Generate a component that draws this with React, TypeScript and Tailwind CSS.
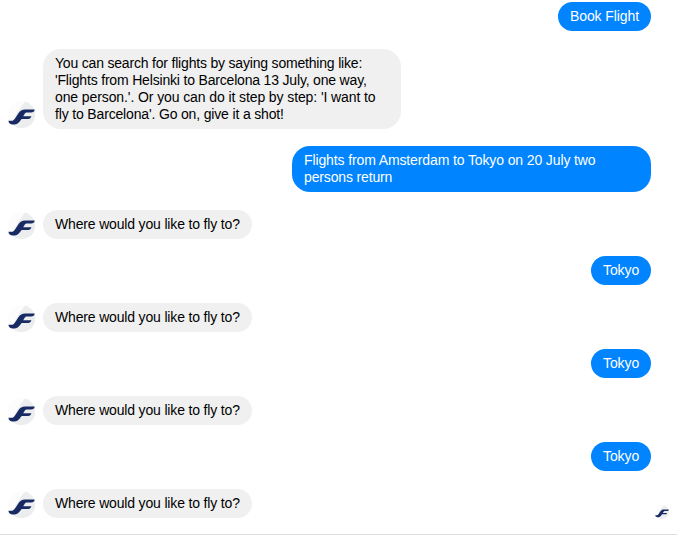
type Message = { from: "bot" | "user"; lines: string[]; box: string; track: string[] };

const question = (box: string): Message => ({
  from: "bot",
  lines: ["Where would you like to fly to?"],
  box,
  track: ["tracking-[-0.165px]"],
});

const tokyo = (box: string): Message => ({
  from: "user",
  lines: ["Tokyo"],
  box,
  track: ["tracking-[-0.1px]"],
});

const messages: Message[] = [
  { from: "user", lines: ["Book Flight"], box: "w-[93px]", track: ["tracking-[-0.1px]"] },
  {
    from: "bot",
    lines: [
      "You can search for flights by saying something like:",
      "'Flights from Helsinki to Barcelona 13 July, one way,",
      "one person.'. Or you can do it step by step: 'I want to",
      "fly to Barcelona'. Go on, give it a shot!",
    ],
    box: "mt-[18px] w-[358px]",
    track: ["tracking-[-0.19px]", "tracking-[-0.18px]", "tracking-[-0.1px]", "tracking-[-0.16px]"],
  },
  {
    from: "user",
    lines: ["Flights from Amsterdam to Tokyo on 20 July two", "persons return"],
    box: "mt-[17px] w-[359px]",
    track: ["tracking-[-0.12px]", "tracking-[-0.15px]"],
  },
  question("mt-[18px] w-[209px]"),
  tokyo("mt-[17px] w-[60px]"),
  question("mt-[18px] w-[209px]"),
  tokyo("mt-[17px] w-[60px]"),
  question("mt-[18px] w-[209px]"),
  tokyo("mt-[17px] w-[60px]"),
  question("mt-[18px] w-[209px]"),
];

function Logo({ className }: { className: string }) {
  return (
    <svg viewBox="0 0 27 27" className={className} aria-hidden="true">
      <circle cx="13.5" cy="13.5" r="13.5" fill="#fcfcfc" />
      <path d="M17 .5 A13.5 13.5 0 1 1 3.6 22.5 C7 15 11.5 7 17 .5Z" fill="#ecedef" />
      <path
        d="M26.7 8.6 H17.2 C13.8 8.6 12.2 9.8 10.6 12 L8 15.9 C6.3 18.6 5.2 19.8 3.4 19.8 H.4 C.8 22.4 2.2 23.4 4.6 23.4 H6 C9 23.4 10.6 22.2 12.3 19.8 L13.6 17.9 H20.2 C21.9 17.9 22.8 17.1 23.4 15.3 H15.2 L16.3 13.5 C17 12.2 17.7 11.6 19 11.6 H23.1 C25.2 11.6 26.4 10.8 26.7 8.6Z"
        fill="#182a63"
      />
    </svg>
  );
}

export default function App() {
  return (
    <main className="flex h-[535px] w-[677px] flex-col overflow-hidden bg-white pt-[2px] font-['Liberation_Sans',Arial,sans-serif] text-[14px] leading-[17px]">
      {messages.map((message, i) => {
        const bot = message.from === "bot";
        const last = i === messages.length - 1;
        const tall = message.lines.length > 1;
        return (
          <div key={i} className={`flex shrink-0 items-end ${bot ? "pl-2" : "justify-end pr-[26px]"}`}>
            {bot && <Logo className={`mr-2 size-[27px] shrink-0 ${tall ? "mb-px" : "mb-[0.5px]"}`} />}
            <div
              className={`${message.box} ${bot ? "bg-[#f0f0f0] text-black" : "bg-[#0084ff] text-white"} ${tall ? "rounded-[18px]" : "rounded-[14.5px]"} shrink-0 py-1.5 pl-3`}
            >
              {message.lines.map((line, j) => (
                <p key={j} className={`whitespace-nowrap ${message.track[j]}`}>
                  {line}
                </p>
              ))}
            </div>
            {last && <Logo className="mr-2 -mb-px ml-auto size-[14px] shrink-0" />}
          </div>
        );
      })}
      <div className="mt-4 h-px shrink-0 bg-[#dddddd]" />
    </main>
  );
}
